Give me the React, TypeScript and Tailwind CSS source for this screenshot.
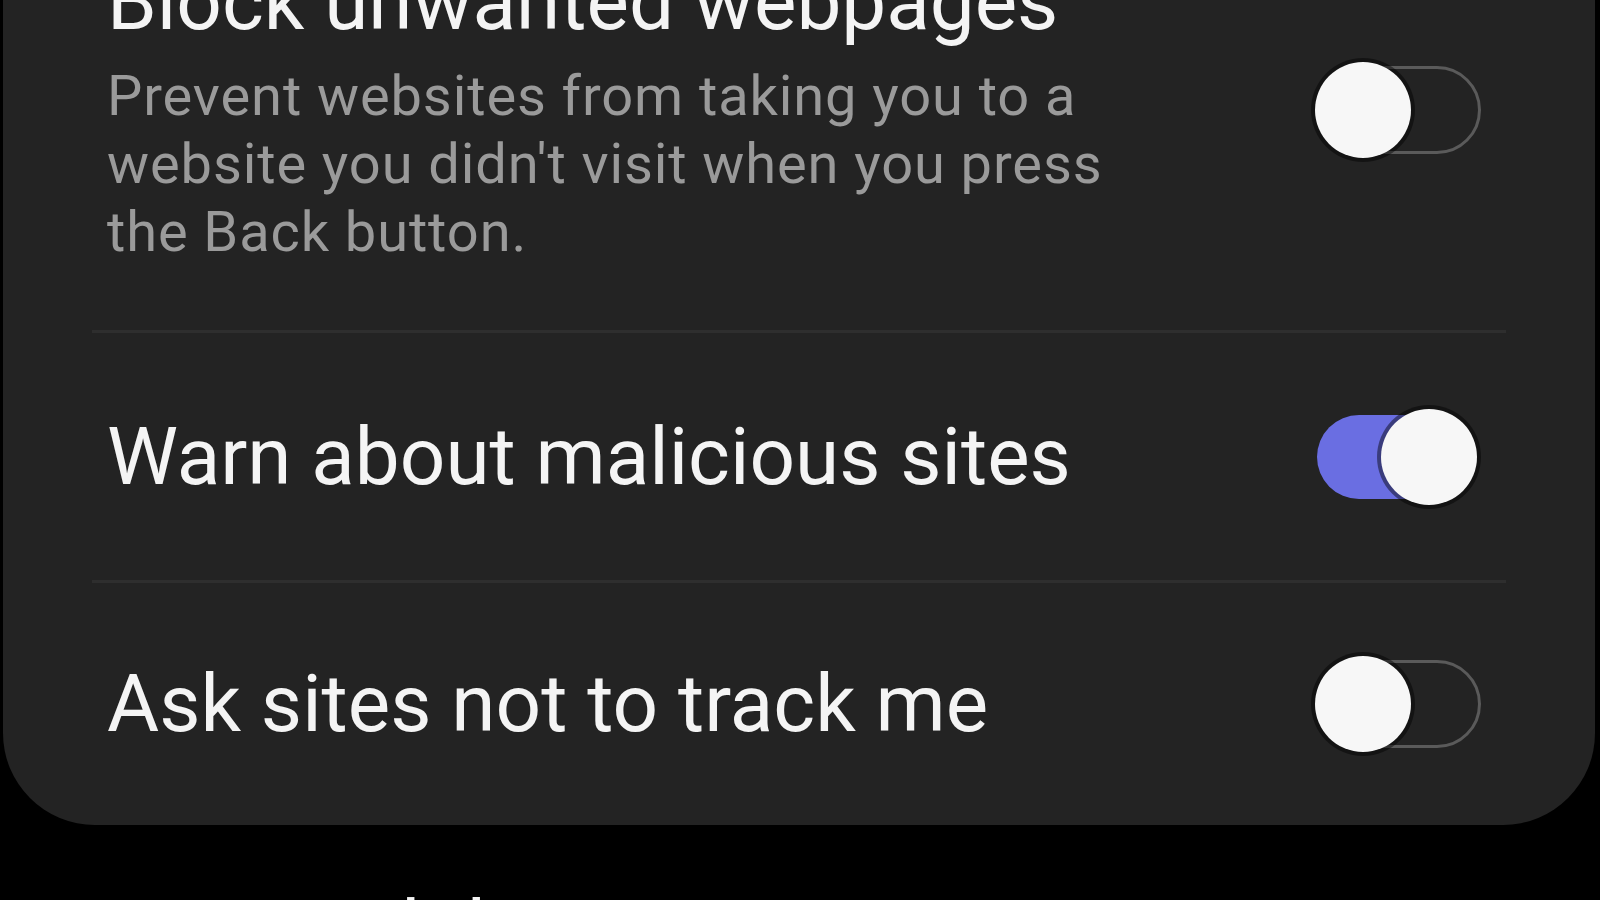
const font = { fontFamily: "Roboto, 'Noto Sans', sans-serif" };

function Toggle({ on }: { on: boolean }) {
  return (
    <div className="relative h-[96px] w-[168px] shrink-0">
      <div
        className={
          on
            ? "absolute left-[2px] right-[8px] top-[6px] bottom-[6px] rounded-full bg-[#6a6ee2]"
            : "absolute left-[8px] right-[2px] top-[4px] bottom-[4px] rounded-full border-[3px] border-[#5a5a5a]"
        }
      />
      <div
        className={
          "absolute top-0 h-[96px] w-[96px] rounded-full bg-[#f7f7f7] shadow-[0_0_0_4px_rgba(0,0,0,0.45)] " +
          (on ? "right-[6px]" : "left-0")
        }
      />
    </div>
  );
}

function Divider() {
  return <div className="mx-[89px] h-[3px] bg-[#2e2e2e]" />;
}

export default function App() {
  return (
    <div className="h-[900px] w-[1600px] overflow-hidden bg-black" style={font}>
      <div className="-mt-[46px] ml-[3px] mr-[5px] rounded-b-[92px] bg-[#232323]">
        <div className="flex items-center justify-between pl-[104px] pr-[112px] pb-[64px]">
          <div className="w-[1080px]">
            <div className="text-[80px] leading-[96px] text-[#f4f4f4]">Block unwanted webpages</div>
            <div className="mt-[12px] text-[56px] leading-[68px] tracking-[0.9px] text-[#9a9a9a]">
              Prevent websites from taking you to a
              <br />
              website you didn't visit when you press
              <br />
              the Back button.
            </div>
          </div>
          <Toggle on={false} />
        </div>
        <Divider />
        <div className="flex h-[247px] items-center justify-between pl-[104px] pr-[112px]">
          <div className="text-[80px] leading-[96px] text-[#f4f4f4]">Warn about malicious sites</div>
          <Toggle on={true} />
        </div>
        <Divider />
        <div className="flex h-[242px] items-center justify-between pl-[104px] pr-[112px]">
          <div className="text-[80px] leading-[96px] text-[#f4f4f4]">Ask sites not to track me</div>
          <Toggle on={false} />
        </div>
      </div>
      <div className="mt-[57px] pl-[107px] text-[80px] leading-[96px] text-[#f4f4f4]">Personal data</div>
    </div>
  );
}
